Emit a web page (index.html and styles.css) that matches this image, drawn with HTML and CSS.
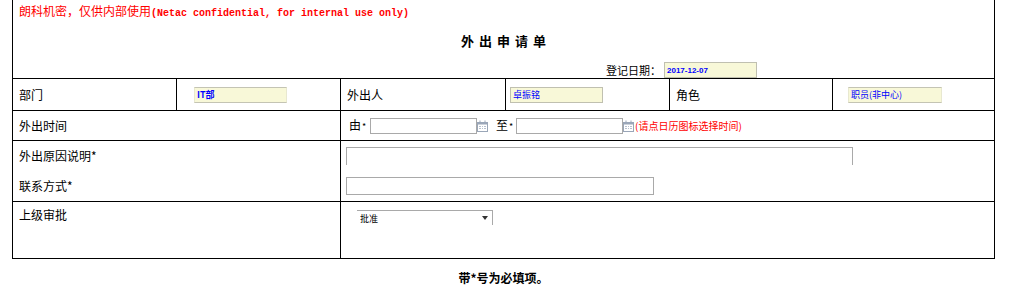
FILE: index.html
```html
<!DOCTYPE html>
<html lang="zh-CN">
<head>
  <meta charset="UTF-8">
  <title>外出申请单</title>
  <link rel="stylesheet" href="styles.css">
</head>
<body>
  <table class="form">
    <colgroup>
      <col style="width: 164px">
      <col style="width: 164px">
      <col style="width: 165px">
      <col style="width: 164px">
      <col style="width: 163px">
      <col style="width: 162px">
    </colgroup>
    <tr>
      <td colspan="6" class="head">
        <div class="secret"><span class="cn">朗科机密，仅供内部使用</span><span class="en">(Netac confidential, for internal use only)</span></div>
        <div class="title">外出申请单</div>
        <div class="date-line">
          <span>登记日期：</span>
          <input type="text" class="fill date" value="2017-12-07" readonly>
        </div>
      </td>
    </tr>
    <tr class="row-short">
      <td class="label">部门</td>
      <td><input type="text" class="fill dept" value="IT部" readonly></td>
      <td class="label">外出人</td>
      <td><input type="text" class="fill person" value="卓振铭" readonly></td>
      <td class="label">角色</td>
      <td><input type="text" class="fill role" value="职员(非中心)" readonly></td>
    </tr>
    <tr class="row-time">
      <td colspan="2" class="label">外出时间</td>
      <td colspan="4" class="time-cell">
        <div class="time">
          <span class="mark">由<i>*</i></span>
          <input type="text" class="plain">
          <svg class="cal" width="11" height="12" viewBox="0 0 11 12">
            <rect x="0.5" y="2.5" width="10" height="9" fill="none" stroke="#9aa6b8"/>
            <rect x="0.5" y="2.5" width="10" height="2" fill="#9aa6b8"/>
            <path d="M3 0.5v3M8 0.5v3" stroke="#9aa6b8"/>
            <path d="M2 6.5h2M5 6.5h1M7 6.5h2M2 8.5h2M5 8.5h1M7 8.5h2" stroke="#b7c0ce"/>
          </svg>
          <span class="mark to">至<i>*</i></span>
          <input type="text" class="plain">
          <svg class="cal" width="11" height="12" viewBox="0 0 11 12">
            <rect x="0.5" y="2.5" width="10" height="9" fill="none" stroke="#9aa6b8"/>
            <rect x="0.5" y="2.5" width="10" height="2" fill="#9aa6b8"/>
            <path d="M3 0.5v3M8 0.5v3" stroke="#9aa6b8"/>
            <path d="M2 6.5h2M5 6.5h1M7 6.5h2M2 8.5h2M5 8.5h1M7 8.5h2" stroke="#b7c0ce"/>
          </svg>
          <span class="hint">(请点日历图标选择时间)</span>
        </div>
      </td>
    </tr>
    <tr class="row-reason">
      <td colspan="2" class="label stack">
        <div class="line">外出原因说明*</div>
        <div class="line">联系方式*</div>
      </td>
      <td colspan="4" class="stack">
        <div class="line"><textarea class="reason"></textarea></div>
        <div class="line"><input type="text" class="plain contact"></div>
      </td>
    </tr>
    <tr class="row-approve">
      <td colspan="2" class="label top">上级审批</td>
      <td colspan="4" class="top">
        <span class="pick">
          <select>
            <option>批准</option>
            <option>不批准</option>
          </select>
        </span>
      </td>
    </tr>
  </table>
  <p class="note">带*号为必填项。</p>
</body>
</html>
```

FILE: styles.css
```css
body {
  margin: 0;
  padding: 0 0 0 12px;
  font-family: "Noto Sans CJK SC", sans-serif;
  font-size: 12px;
  line-height: 14px;
  color: #000;
  background-color: #fff;
}
.form {
  border-collapse: collapse;
  table-layout: fixed;
  width: 983px;
}
.form td {
  border: 1px solid #000;
  padding: 0;
  vertical-align: middle;
}
.form td.head {
  border-top: none;
  height: 77px;
  vertical-align: top;
}
.secret {
  padding: 4px 0 0 6px;
  height: 14px;
  color: #ff0000;
  font-weight: bold;
  white-space: nowrap;
}
.secret .cn {
  font-size: 12px;
  font-weight: normal;
}
.secret .en {
  font-family: "Liberation Mono", monospace;
  font-size: 10px;
}
.title {
  margin-top: 15px;
  height: 16px;
  line-height: 16px;
  text-align: center;
  font-size: 13px;
  font-weight: bold;
  letter-spacing: 5px;
  padding-left: 5px;
}
.date-line {
  margin-top: 13px;
  display: flex;
  align-items: center;
  height: 16px;
  padding-left: 593px;
  font-size: 11px;
}
.date-line span {
  width: 58px;
}
input,
textarea,
select {
  font-family: inherit;
  margin: 0;
  box-sizing: border-box;
  outline: none;
}
.fill {
  height: 16px;
  width: 93px;
  padding: 0 2px;
  border: 1px solid #c4c4b4;
  border-left-color: #e8e8d0;
  border-right-color: #e8e8d0;
  background-color: #f8f8d8;
  color: #0000ff;
  font-size: 9px;
}
.fill.date {
  font-family: "Liberation Sans", sans-serif;
  font-size: 8px;
  font-weight: bold;
  border: 1px solid #c0c0b0;
}
.row-short {
  height: 32px;
}
.label {
  padding-left: 6px !important;
}
.fill.dept {
  margin-left: 17px;
  font-weight: bold;
}
.fill.person {
  margin-left: 4px;
  border: 1px solid #c0c0b0;
}
.fill.role {
  margin-left: 15px;
  width: 94px;
}
.row-time {
  height: 30px;
}
.time {
  display: flex;
  align-items: center;
  padding-left: 8px;
}
.mark {
  width: 21px;
  white-space: nowrap;
}
.mark i {
  font-style: normal;
  font-size: 9px;
  margin-left: 1px;
}
.mark.to {
  margin-left: 8px;
  width: 20px;
}
.plain {
  width: 107px;
  height: 16px;
  border: 1px solid #a9a9a9;
  background-color: #fff;
  padding: 0 2px;
}
.cal {
  display: block;
  margin-top: 1px;
}
.hint {
  margin-left: 1px;
  color: #ff0000;
  font-size: 10px;
  white-space: nowrap;
}
.row-reason {
  height: 61px;
}
.stack {
  vertical-align: top !important;
}
.line {
  height: 30px;
  display: flex;
  align-items: center;
}
td.stack:not(.label) {
  padding-left: 5px;
}
.reason {
  display: block;
  width: 507px;
  height: 18px;
  margin-top: 6px;
  align-self: flex-start;
  border: 1px solid #a9a9a9;
  border-bottom: none;
  resize: none;
  overflow: hidden;
}
.contact {
  width: 308px;
  height: 18px;
}
.row-approve {
  height: 57px;
}
.top {
  vertical-align: top !important;
}
td.label.top {
  padding-top: 6px;
}
td.top:not(.label) {
  padding: 8px 0 0 16px;
}
.pick {
  position: relative;
  display: inline-block;
  height: 15px;
  vertical-align: top;
}
.pick select {
  -webkit-appearance: none;
  appearance: none;
  display: block;
  width: 136px;
  height: 15px;
  padding: 0 0 0 3px;
  border: 1px solid #a9a9a9;
  border-left: none;
  border-bottom: none;
  border-radius: 0;
  background-color: #fff;
  font-size: 9px;
  line-height: 13px;
  color: #000;
}
.pick::after {
  content: "";
  position: absolute;
  right: 5px;
  top: 6px;
  border-left: 3px solid transparent;
  border-right: 3px solid transparent;
  border-top: 4px solid #333;
}
.note {
  width: 983px;
  margin: 12px 0 0;
  text-align: center;
  font-weight: bold;
  font-size: 12px;
}
```
